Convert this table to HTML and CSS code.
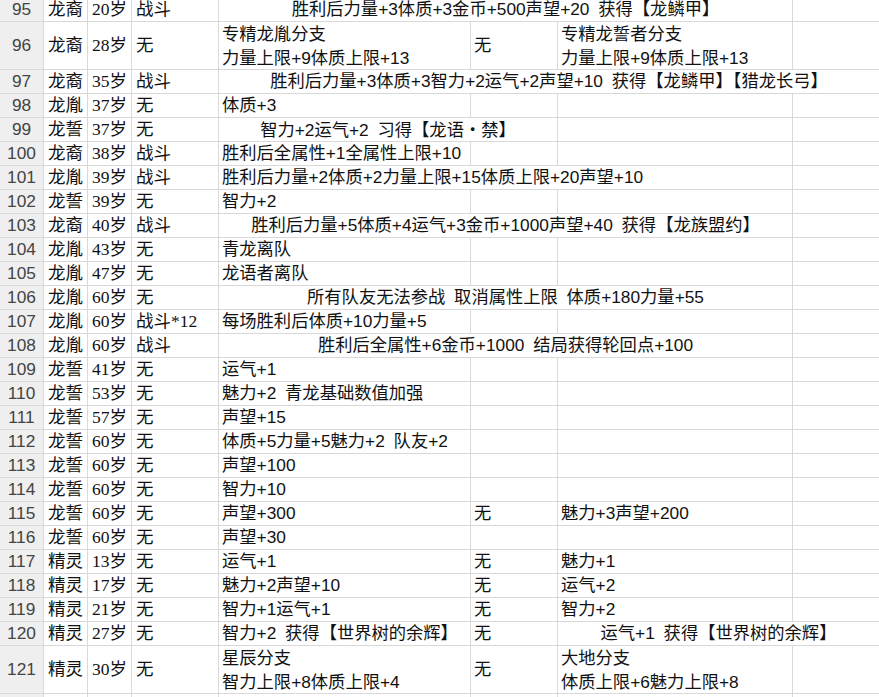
FILE: index.html
```html
<!DOCTYPE html>
<html lang="zh-CN">
<head>
<meta charset="utf-8">
<title>Sheet</title>
<link rel="stylesheet" href="styles.css">
</head>
<body>
<div class="sheet">
  <div class="row cut"><div class="hd">95</div><div class="c">龙裔</div><div class="c">20岁</div><div class="c">战斗</div><div class="x s3 mid">胜利后力量+3体质+3金币+500声望+20 获得【龙鳞甲】</div><div class="x"></div></div>
  <div class="row tall"><div class="hd">96</div><div class="c">龙裔</div><div class="c">28岁</div><div class="c">无</div><div class="x"><span>专精龙胤分支</span><span>力量上限+9体质上限+13</span></div><div class="x">无</div><div class="x"><span>专精龙誓者分支</span><span>力量上限+9体质上限+13</span></div><div class="x"></div></div>
  <div class="row"><div class="hd">97</div><div class="c">龙裔</div><div class="c">35岁</div><div class="c">战斗</div><div class="x s4 mid">胜利后力量+3体质+3智力+2运气+2声望+10 获得【龙鳞甲】【猎龙长弓】</div></div>
  <div class="row"><div class="hd">98</div><div class="c">龙胤</div><div class="c">37岁</div><div class="c">无</div><div class="x">体质+3</div><div class="x"></div><div class="x"></div><div class="x"></div></div>
  <div class="row"><div class="hd">99</div><div class="c">龙誓</div><div class="c">37岁</div><div class="c">无</div><div class="x s2 mid"><span>智力+2运气+2 习得【龙语<i class="dot">·</i>禁】</span></div><div class="x"></div><div class="x"></div></div>
  <div class="row"><div class="hd">100</div><div class="c">龙裔</div><div class="c">38岁</div><div class="c">战斗</div><div class="x">胜利后全属性+1全属性上限+10</div><div class="x"></div><div class="x"></div><div class="x"></div></div>
  <div class="row"><div class="hd">101</div><div class="c">龙胤</div><div class="c">39岁</div><div class="c">战斗</div><div class="x s3">胜利后力量+2体质+2力量上限+15体质上限+20声望+10</div><div class="x"></div></div>
  <div class="row"><div class="hd">102</div><div class="c">龙誓</div><div class="c">39岁</div><div class="c">无</div><div class="x">智力+2</div><div class="x"></div><div class="x"></div><div class="x"></div></div>
  <div class="row"><div class="hd">103</div><div class="c">龙裔</div><div class="c">40岁</div><div class="c">战斗</div><div class="x s3 mid">胜利后力量+5体质+4运气+3金币+1000声望+40 获得【龙族盟约】</div><div class="x"></div></div>
  <div class="row"><div class="hd">104</div><div class="c">龙胤</div><div class="c">43岁</div><div class="c">无</div><div class="x">青龙离队</div><div class="x"></div><div class="x"></div><div class="x"></div></div>
  <div class="row"><div class="hd">105</div><div class="c">龙胤</div><div class="c">47岁</div><div class="c">无</div><div class="x">龙语者离队</div><div class="x"></div><div class="x"></div><div class="x"></div></div>
  <div class="row"><div class="hd">106</div><div class="c">龙胤</div><div class="c">60岁</div><div class="c">无</div><div class="x s3 mid">所有队友无法参战 取消属性上限 体质+180力量+55</div><div class="x"></div></div>
  <div class="row"><div class="hd">107</div><div class="c">龙胤</div><div class="c">60岁</div><div class="c">战斗*12</div><div class="x">每场胜利后体质+10力量+5</div><div class="x"></div><div class="x"></div><div class="x"></div></div>
  <div class="row"><div class="hd">108</div><div class="c">龙胤</div><div class="c">60岁</div><div class="c">战斗</div><div class="x s3 mid">胜利后全属性+6金币+1000 结局获得轮回点+100</div><div class="x"></div></div>
  <div class="row"><div class="hd">109</div><div class="c">龙誓</div><div class="c">41岁</div><div class="c">无</div><div class="x">运气+1</div><div class="x"></div><div class="x"></div><div class="x"></div></div>
  <div class="row"><div class="hd">110</div><div class="c">龙誓</div><div class="c">53岁</div><div class="c">无</div><div class="x">魅力+2 青龙基础数值加强</div><div class="x"></div><div class="x"></div><div class="x"></div></div>
  <div class="row"><div class="hd">111</div><div class="c">龙誓</div><div class="c">57岁</div><div class="c">无</div><div class="x">声望+15</div><div class="x"></div><div class="x"></div><div class="x"></div></div>
  <div class="row"><div class="hd">112</div><div class="c">龙誓</div><div class="c">60岁</div><div class="c">无</div><div class="x">体质+5力量+5魅力+2 队友+2</div><div class="x"></div><div class="x"></div><div class="x"></div></div>
  <div class="row"><div class="hd">113</div><div class="c">龙誓</div><div class="c">60岁</div><div class="c">无</div><div class="x">声望+100</div><div class="x"></div><div class="x"></div><div class="x"></div></div>
  <div class="row"><div class="hd">114</div><div class="c">龙誓</div><div class="c">60岁</div><div class="c">无</div><div class="x">智力+10</div><div class="x"></div><div class="x"></div><div class="x"></div></div>
  <div class="row"><div class="hd">115</div><div class="c">龙誓</div><div class="c">60岁</div><div class="c">无</div><div class="x">声望+300</div><div class="x">无</div><div class="x">魅力+3声望+200</div><div class="x"></div></div>
  <div class="row"><div class="hd">116</div><div class="c">龙誓</div><div class="c">60岁</div><div class="c">无</div><div class="x">声望+30</div><div class="x"></div><div class="x"></div><div class="x"></div></div>
  <div class="row"><div class="hd">117</div><div class="c">精灵</div><div class="c">13岁</div><div class="c">无</div><div class="x">运气+1</div><div class="x">无</div><div class="x">魅力+1</div><div class="x"></div></div>
  <div class="row"><div class="hd">118</div><div class="c">精灵</div><div class="c">17岁</div><div class="c">无</div><div class="x">魅力+2声望+10</div><div class="x">无</div><div class="x">运气+2</div><div class="x"></div></div>
  <div class="row"><div class="hd">119</div><div class="c">精灵</div><div class="c">21岁</div><div class="c">无</div><div class="x">智力+1运气+1</div><div class="x">无</div><div class="x">智力+2</div><div class="x"></div></div>
  <div class="row"><div class="hd">120</div><div class="c">精灵</div><div class="c">27岁</div><div class="c">无</div><div class="x">智力+2 获得【世界树的余辉】</div><div class="x">无</div><div class="x s2 mid">运气+1 获得【世界树的余辉】</div></div>
  <div class="row tall"><div class="hd">121</div><div class="c">精灵</div><div class="c">30岁</div><div class="c">无</div><div class="x"><span>星辰分支</span><span>智力上限+8体质上限+4</span></div><div class="x">无</div><div class="x"><span>大地分支</span><span>体质上限+6魅力上限+8</span></div><div class="x"></div></div>
  <div class="row"><div class="hd"></div><div class="c"></div><div class="c"></div><div class="c"></div><div class="x"></div><div class="x"></div><div class="x"></div><div class="x"></div></div>
</div>
</body>
</html>
```

FILE: styles.css
```css
html, body {
  margin: 0;
  padding: 0;
  background: #ffffff;
  overflow: hidden;
}

.sheet {
  display: flex;
  flex-direction: column;
  gap: 1px;
  background: #d9d9d9;
  width: 879px;
}

.row {
  display: grid;
  grid-template-columns: 43px 43px 43px 86px 251px 86px 234px 1fr;
  column-gap: 1px;
  height: 23px;
}

.row.cut {
  height: 21px;
}

.row.tall {
  height: 47px;
}

.hd,
.c,
.x {
  background: #ffffff;
  display: flex;
  flex-direction: column;
  justify-content: center;
  align-items: flex-start;
  white-space: nowrap;
  overflow: hidden;
  font-size: 17.3px;
  line-height: 23px;
  color: #111111;
  padding: 0 3px;
  word-spacing: 4px;
}

.row.cut > div {
  justify-content: flex-end;
}

.hd {
  background: #efefef;
  align-items: center;
  padding: 0;
  font-family: "Liberation Sans", "Noto Sans CJK SC", sans-serif;
  color: #444444;
}

.c {
  font-family: "Liberation Serif", "Noto Sans CJK SC", serif;
  font-size: 17.5px;
  padding-left: 4px;
}

.x {
  font-family: "Liberation Sans", "Noto Sans CJK SC", sans-serif;
}

.x .dot {
  font-style: normal;
  font-family: "Noto Sans CJK SC", sans-serif;
  line-height: 23px;
}

.tall .x span {
  line-height: 24px;
}

.s2 {
  grid-column: span 2;
}

.s3 {
  grid-column: span 3;
}

.s4 {
  grid-column: span 4;
}

.mid {
  align-items: center;
}
```
